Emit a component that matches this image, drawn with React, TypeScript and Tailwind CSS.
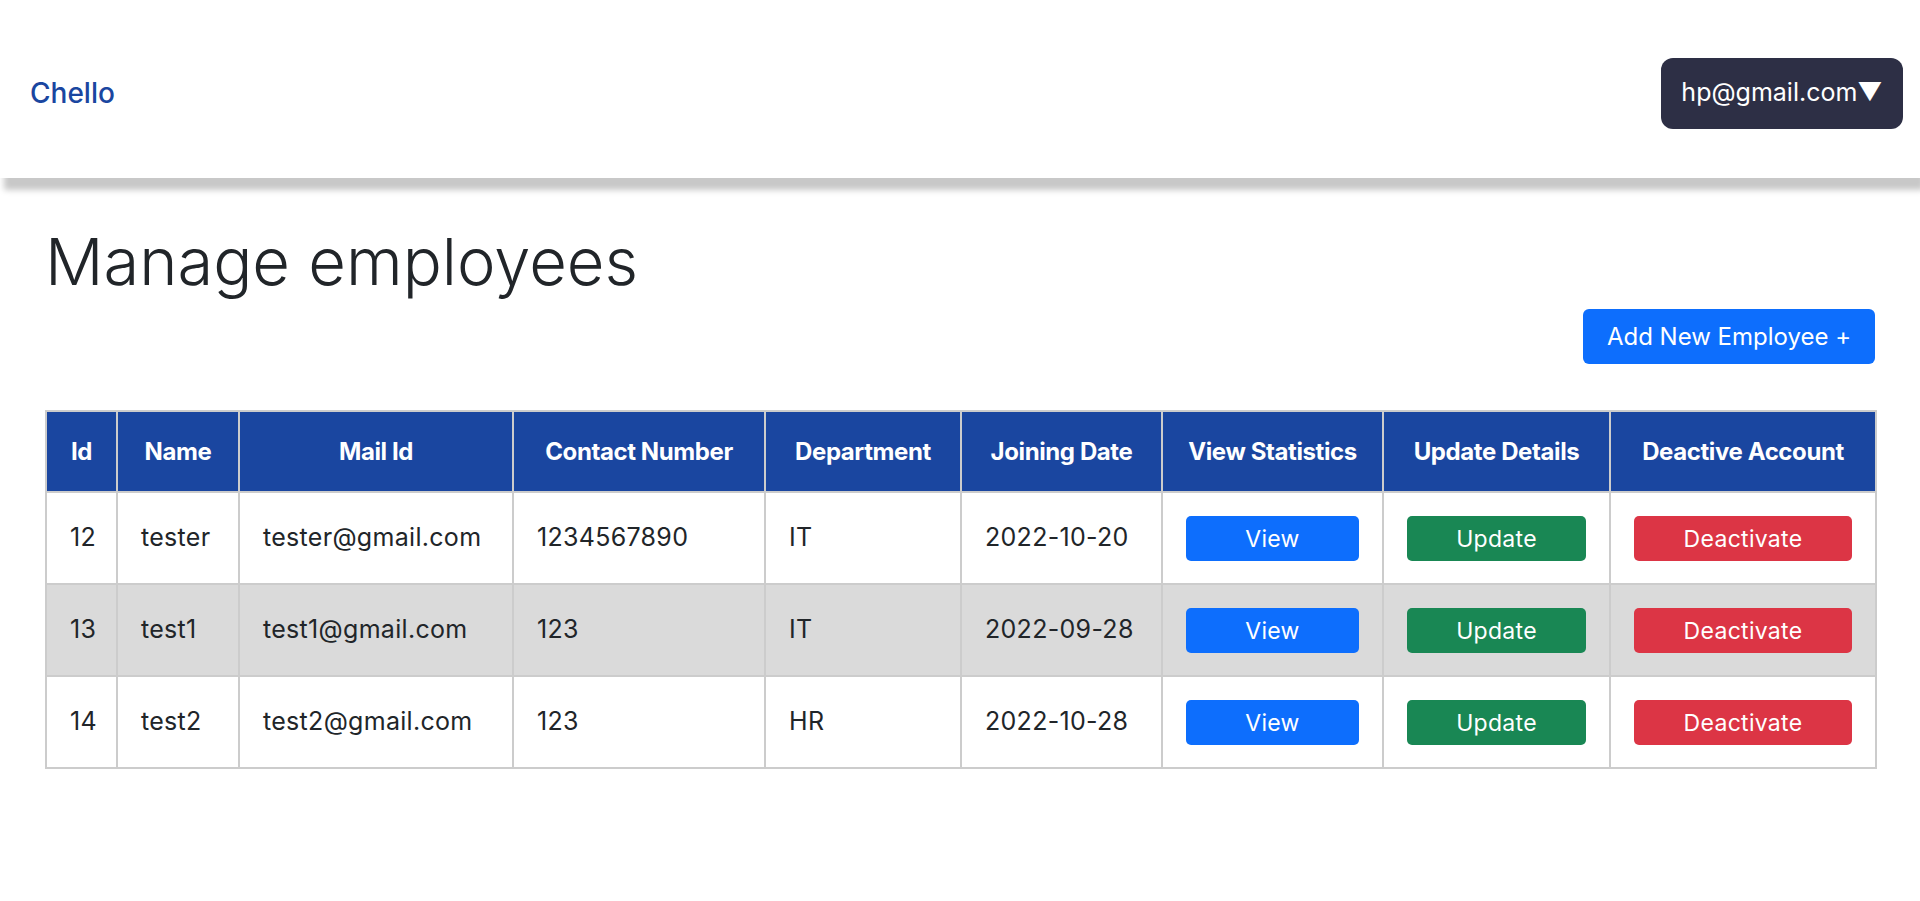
import React from 'react'

type Employee = {
	id: number
	name: string
	mail: string
	contact: string
	department: string
	joined: string
}

const EMPLOYEES: Employee[] = [
	{ id: 12, name: 'tester', mail: 'tester@gmail.com', contact: '1234567890', department: 'IT', joined: '2022-10-20' },
	{ id: 13, name: 'test1', mail: 'test1@gmail.com', contact: '123', department: 'IT', joined: '2022-09-28' },
	{ id: 14, name: 'test2', mail: 'test2@gmail.com', contact: '123', department: 'HR', joined: '2022-10-28' }
]

const COLUMNS = [
	{ label: 'Id', width: 'w-[71px]' },
	{ label: 'Name', width: 'w-[122px]' },
	{ label: 'Mail Id', width: 'w-[274px]' },
	{ label: 'Contact Number', width: 'w-[252px]' },
	{ label: 'Department', width: 'w-[196px]' },
	{ label: 'Joining Date', width: 'w-[201px]' },
	{ label: 'View Statistics', width: 'w-[221px]' },
	{ label: 'Update Details', width: 'w-[227px]' },
	{ label: 'Deactive Account', width: 'w-[266px]' }
]

const cell = 'border-2 border-[#cccccc] px-[23px] text-left align-middle'
const actionBtn = 'block w-full h-[45px] rounded-[5px] pt-[3px] text-[23px] text-white'

export default function App() {
	return (
		<div className="min-h-screen bg-white text-[#212529] font-['Inter','Open_Sans',sans-serif]">
			{/* Navbar */}
			<nav className="relative z-10 flex h-[178px] items-center justify-between bg-white pl-[30px] pr-[17px] pt-[8px] shadow-[4px_12px_6px_#c8c8c8]">
				<a className="text-[28px] font-medium text-[#1a46a0]">Chello</a>
				<button className="flex h-[71px] w-[242px] items-center justify-center rounded-[12px] bg-[#2d2f45] text-[25px] text-white">
					hp@gmail.com▼
				</button>
			</nav>

			{/* Content */}
			<main className="px-[45px]">
				<h1 className="mt-[45px] text-[65px] font-light leading-[78px] text-[#212529]">Manage employees</h1>

				<div className="mt-[8px] flex justify-end">
					<button className="h-[55px] w-[292px] rounded-[6px] bg-[#0d6efd] text-[24px] text-white">
						Add New Employee +
					</button>
				</div>

				<table className="mt-[46px] w-full table-fixed border-collapse border-2 border-[#cccccc]">
					<thead>
						<tr className="h-[81px] bg-[#1a46a0] text-white">
							{COLUMNS.map(col => (
								<th
									key={col.label}
									className={`${col.width} border-2 border-[#cccccc] px-1 text-center text-[24px] font-bold tracking-[-0.4px]`}
								>
									{col.label}
								</th>
							))}
						</tr>
					</thead>
					<tbody>
						{EMPLOYEES.map((emp, i) => (
							<tr
								key={emp.id}
								className={`h-[92px] text-[25px] tracking-[0.3px] ${i === 1 ? 'bg-[#dadada]' : 'bg-white'}`}
							>
								<td className={cell}>{emp.id}</td>
								<td className={cell}>{emp.name}</td>
								<td className={cell}>{emp.mail}</td>
								<td className={cell}>{emp.contact}</td>
								<td className={cell}>{emp.department}</td>
								<td className={cell}>{emp.joined}</td>
								<td className={cell}>
									<button className={`${actionBtn} bg-[#0d6efd]`}>View</button>
								</td>
								<td className={cell}>
									<button className={`${actionBtn} bg-[#198754]`}>Update</button>
								</td>
								<td className={cell}>
									<button className={`${actionBtn} bg-[#dc3545]`}>Deactivate</button>
								</td>
							</tr>
						))}
					</tbody>
				</table>
			</main>
		</div>
	)
}
